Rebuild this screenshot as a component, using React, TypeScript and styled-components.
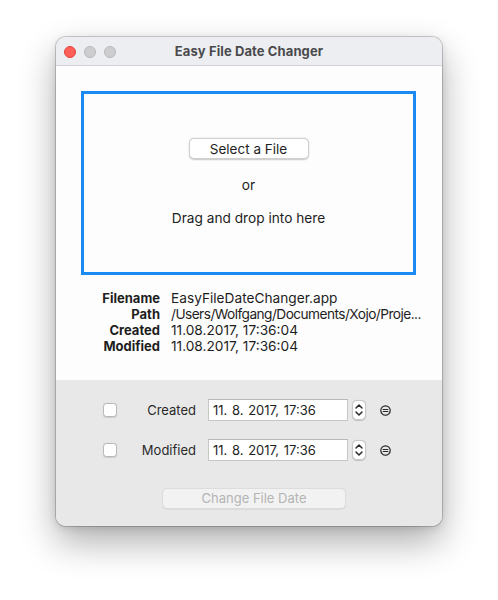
import React from "react";
import styled, { createGlobalStyle } from "styled-components";

const Global = createGlobalStyle`
  html, body { margin: 0; padding: 0; background: #ffffff; }
  body { font-family: Inter, "Liberation Sans", sans-serif; -webkit-font-smoothing: antialiased; }
`;

const Page = styled.div`
  width: 498px;
  height: 600px;
  padding: 37px 0 0 56px;
  box-sizing: border-box;
`;

const Window = styled.div`
  width: 386px;
  height: 489px;
  border-radius: 10px;
  overflow: hidden;
  display: flex;
  flex-direction: column;
  box-shadow: 0 0 0 1px rgba(0, 0, 0, 0.18), 0 16px 36px rgba(0, 0, 0, 0.32), 0 2px 8px rgba(0,0,0,0.12);
  background: #fdfdfd;
`;

const TitleBar = styled.div`
  height: 28px;
  flex: none;
  position: relative;
  display: flex;
  align-items: center;
  justify-content: center;
  background: #eceef2;
  border-bottom: 1px solid #d2d3d6;
`;

const Lights = styled.div`
  position: absolute;
  left: 8px;
  top: 9px;
  display: flex;
  gap: 8px;
`;

const Light = styled.span<{ $c: string; $b: string }>`
  width: 12px;
  height: 12px;
  border-radius: 50%;
  box-sizing: border-box;
  background: ${(p) => p.$c};
  border: 0.5px solid ${(p) => p.$b};
`;

const Title = styled.div`
  font-size: 13px;
  font-weight: 700;
  color: #4a4a4d;
  letter-spacing: 0.1px;
`;

const Content = styled.div`
  flex: none;
  height: 314px;
  padding: 25px 26px 0 25px;
  box-sizing: border-box;
  background: #fdfdfd;
`;

const DropZone = styled.div`
  height: 184px;
  box-sizing: border-box;
  border: 3px solid #1a8bf5;
  display: flex;
  flex-direction: column;
  align-items: center;
  padding-top: 44px;
  color: #1e1e1e;
  font-size: 13.7px;
`;

const PushButton = styled.button<{ $disabled?: boolean }>`
  font-family: inherit;
  font-size: 13px;
  line-height: 16px;
  height: 21px;
  padding: 0;
  border-radius: 5px;
  box-sizing: border-box;
  color: ${(p) => (p.$disabled ? "#b4b4b4" : "#1e1e1e")};
  background: ${(p) => (p.$disabled ? "#f2f2f2" : "#ffffff")};
  border: 0.5px solid ${(p) => (p.$disabled ? "#dcdcdc" : "#cfcfcf")};
  box-shadow: ${(p) => (p.$disabled ? "0 0.5px 1px rgba(0,0,0,0.06)" : "0 0.5px 1.5px rgba(0,0,0,0.22)")};
`;

const SelectButton = styled(PushButton)`
  width: 120px;
  font-size: 13.5px;
`;

const DropLine = styled.div<{ $mt: number }>`
  margin-top: ${(p) => p.$mt}px;
  line-height: 16px;
`;

const InfoGrid = styled.div`
  margin: 15px 0 0 -25px;
  display: grid;
  grid-template-columns: 104px 1fr;
  column-gap: 11px;
  font-size: 13px;
  line-height: 16px;
  color: #1e1e1e;
`;

const InfoLabel = styled.div`
  text-align: right;
  font-weight: 700;
`;

const InfoValue = styled.div<{ $tight?: boolean }>`
  white-space: nowrap;
  font-size: 13.7px;
  letter-spacing: ${(p) => (p.$tight ? "-0.55px" : "0")};
`;

const Panel = styled.div`
  flex: 1;
  background: #e8e8e8;
  display: flex;
  flex-direction: column;
  padding: 19px 0 0 47px;
  box-sizing: border-box;
`;

const DateRow = styled.div<{ $mt?: number }>`
  display: flex;
  align-items: center;
  height: 22px;
  margin-top: ${(p) => p.$mt ?? 0}px;
`;

const Check = styled.span`
  width: 14px;
  height: 14px;
  box-sizing: border-box;
  border-radius: 3.5px;
  background: #ffffff;
  border: 0.5px solid #b9b9b9;
  box-shadow: 0 0.5px 1px rgba(0, 0, 0, 0.12);
`;

const RowLabel = styled.span`
  width: 79px;
  text-align: right;
  font-size: 13px;
  color: #2a2a2a;
`;

const DateField = styled.div`
  margin-left: 12px;
  width: 140px;
  height: 22px;
  box-sizing: border-box;
  background: #ffffff;
  border: 1px solid #c6c6c6;
  border-top-color: #b8b8b8;
  padding-left: 4px;
  font-size: 13px;
  line-height: 20px;
  color: #1e1e1e;
  word-spacing: 1px;
`;

const Stepper = styled.div`
  margin-left: 4px;
  width: 14px;
  height: 20px;
  box-sizing: border-box;
  background: #ffffff;
  border-radius: 5px;
  border: 0.5px solid #c9c9c9;
  box-shadow: 0 0.5px 1px rgba(0, 0, 0, 0.18);
  display: flex;
  align-items: center;
  justify-content: center;
`;

const IconWrap = styled.span`
  margin-left: 14px;
  width: 11px;
  height: 11px;
  display: flex;
`;

const ButtonRow = styled.div`
  margin: 26px 0 0 59px;
`;

const ChangeButton = styled(PushButton)`
  width: 184px;
  height: 21px;
`;

const StepperIcon = () => (
  <Stepper>
    <svg width="10" height="16" viewBox="0 0 10 16" fill="none" stroke="#2a2a2a" strokeWidth="1.5" strokeLinecap="round" strokeLinejoin="round">
      <path d="M2 6 L5 3 L8 6" />
      <path d="M2 10 L5 13 L8 10" />
    </svg>
  </Stepper>
);

const EqualsIcon = () => (
  <IconWrap>
    <svg width="11" height="11" viewBox="0 0 11 11" fill="none" stroke="#262626" strokeWidth="1.2">
      <circle cx="5.5" cy="5.5" r="4.7" />
      <path d="M3.2 4.5 H7.8 M3.2 6.5 H7.8" strokeLinecap="round" />
    </svg>
  </IconWrap>
);

const info: [string, string, boolean][] = [
  ["Filename", "EasyFileDateChanger.app", false],
  ["Path", "/Users/Wolfgang/Documents/Xojo/Proje...", true],
  ["Created", "11.08.2017, 17:36:04", false],
  ["Modified", "11.08.2017, 17:36:04", false],
];

export default function App() {
  return (
    <Page>
      <Global />
      <Window>
        <TitleBar>
          <Lights>
            <Light $c="#fe5f57" $b="#e0443e" />
            <Light $c="#cdcdd0" $b="#b8b8bc" />
            <Light $c="#cdcdd0" $b="#b8b8bc" />
          </Lights>
          <Title>Easy File Date Changer</Title>
        </TitleBar>
        <Content>
          <DropZone>
            <SelectButton>Select a File</SelectButton>
            <DropLine $mt={18}>or</DropLine>
            <DropLine $mt={17}>Drag and drop into here</DropLine>
          </DropZone>
          <InfoGrid>
            {info.map(([k, v, t]) => (
              <React.Fragment key={k}>
                <InfoLabel>{k}</InfoLabel>
                <InfoValue $tight={t}>{v}</InfoValue>
              </React.Fragment>
            ))}
          </InfoGrid>
        </Content>
        <Panel>
          <DateRow>
            <Check />
            <RowLabel>Created</RowLabel>
            <DateField>11. 8. 2017, 17:36</DateField>
            <StepperIcon />
            <EqualsIcon />
          </DateRow>
          <DateRow $mt={18}>
            <Check />
            <RowLabel>Modified</RowLabel>
            <DateField>11. 8. 2017, 17:36</DateField>
            <StepperIcon />
            <EqualsIcon />
          </DateRow>
          <ButtonRow>
            <ChangeButton $disabled>Change File Date</ChangeButton>
          </ButtonRow>
        </Panel>
      </Window>
    </Page>
  );
}
